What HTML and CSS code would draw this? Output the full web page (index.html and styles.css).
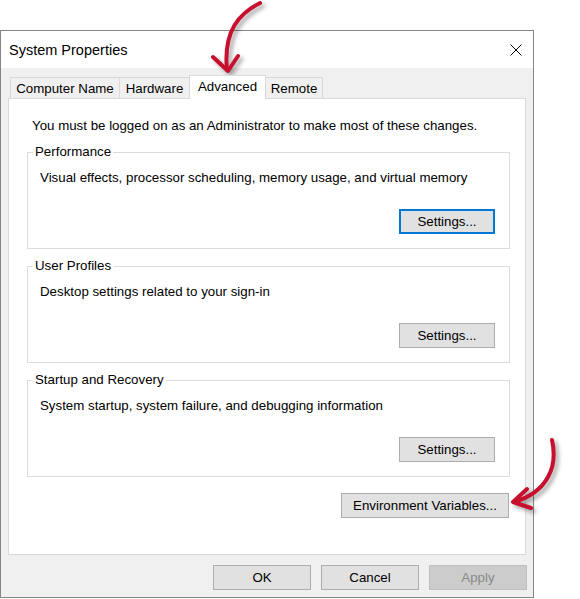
FILE: index.html
```html
<!DOCTYPE html>
<html lang="en">

<head>
    <meta charset="UTF-8">
    <meta name="viewport" content="width=device-width, initial-scale=1.0">
    <title>System Properties</title>
    <link rel="stylesheet" href="styles.css">
</head>

<body>
    <div class="dialog">
        <div class="titlebar">
            <span class="title">System Properties</span>
            <svg class="close" width="12" height="12" viewBox="0 0 12 12">
                <path d="M0.5 0.5 L11.5 11.5 M11.5 0.5 L0.5 11.5" stroke="#000" stroke-width="1" fill="none" />
            </svg>
        </div>
        <div class="client">
            <div class="tabs">
                <div class="tab tab-name">Computer Name</div>
                <div class="tab tab-hardware">Hardware</div>
                <div class="tab tab-active">Advanced</div>
                <div class="tab tab-remote">Remote</div>
            </div>
            <div class="tab-page">
                <p class="notice">You must be logged on as an Administrator to make most of these changes.</p>

                <fieldset class="group">
                    <legend>Performance</legend>
                    <p class="group-text">Visual effects, processor scheduling, memory usage, and virtual memory</p>
                    <div class="group-actions"><button class="btn btn-settings btn-default">Settings...</button></div>
                </fieldset>

                <fieldset class="group">
                    <legend>User Profiles</legend>
                    <p class="group-text">Desktop settings related to your sign-in</p>
                    <div class="group-actions"><button class="btn btn-settings">Settings...</button></div>
                </fieldset>

                <fieldset class="group">
                    <legend>Startup and Recovery</legend>
                    <p class="group-text">System startup, system failure, and debugging information</p>
                    <div class="group-actions"><button class="btn btn-settings">Settings...</button></div>
                </fieldset>

                <div class="env-row">
                    <button class="btn btn-env">Environment Variables...</button>
                </div>
            </div>
            <div class="dialog-buttons">
                <button class="btn btn-wide">OK</button>
                <button class="btn btn-wide">Cancel</button>
                <button class="btn btn-wide" disabled>Apply</button>
            </div>
        </div>
    </div>

    <!-- red callout arrows on top of the dialog -->
    <svg class="callouts" width="580" height="599" viewBox="0 0 580 599">
        <g class="arrow">
            <path d="M260 3 C240 13, 223 30, 227 70" />
            <path d="M213 57 L228 71 L238 56" />
        </g>
        <g class="arrow">
            <path d="M552 440 C558 466, 548 492, 514 502" />
            <path d="M527 489 L513 502 L531 508" />
        </g>
    </svg>
</body>

</html>
```

FILE: styles.css
```css
body {
    margin: 0;
    background-color: #ffffff;
    font-family: "Liberation Sans", Arial, sans-serif;
    font-size: 13.3px;
    color: #000000;
    position: relative;
    width: 580px;
    height: 599px;
    overflow: hidden;
}

.dialog {
    margin-top: 30px;
    width: 534px;
    height: 568px;
    box-sizing: border-box;
    border: 1px solid #868686;
    display: flex;
    flex-direction: column;
}

.titlebar {
    height: 37px;
    background-color: #ffffff;
    display: flex;
    align-items: center;
    justify-content: space-between;
    padding: 0 11px 0 8px;
}

.title {
    font-size: 14.5px;
    line-height: 18px;
}

.close {
    display: block;
}

.client {
    flex: 1;
    background-color: #f0f0f0;
    padding: 7px 6px 0 7px;
}

.tabs {
    height: 23px;
    display: flex;
    align-items: flex-end;
    padding-left: 2px;
}

.tab {
    height: 21px;
    box-sizing: border-box;
    border-top: 1px solid #d9d9d9;
    border-left: 1px solid #d9d9d9;
    background-color: #f0f0f0;
    text-align: center;
    line-height: 21px;
    white-space: nowrap;
}

.tab-name {
    width: 109px;
}

.tab-hardware {
    width: 70px;
}

.tab-active {
    width: 77px;
    height: 24px;
    line-height: 21px;
    margin-bottom: -1px;
    border-right: 1px solid #d9d9d9;
    background-color: #ffffff;
    position: relative;
    z-index: 1;
}

.tab-remote {
    width: 57px;
    border-left: none;
    border-right: 1px solid #d9d9d9;
}

.tab-page {
    height: 457px;
    margin-right: 1px;
    box-sizing: border-box;
    border: 1px solid #d9d9d9;
    background-color: #ffffff;
    padding-top: 19px;
}

.notice {
    margin: 0;
    padding-left: 23px;
    line-height: 15px;
}

.group {
    margin: 9px 15px 0 18px;
    padding: 0;
    border: 1px solid #dcdcdc;
    min-width: 0;
}

.notice + .group {
    margin-top: 11px;
}

.group legend {
    margin-left: 5px;
    padding: 0 2px;
    line-height: 16px;
}

.group-text {
    margin: 10px 0 0 12px;
    line-height: 15px;
}

.group-actions {
    display: flex;
    justify-content: flex-end;
    margin: 24px 14px 14px 0;
}

.btn {
    height: 25px;
    box-sizing: border-box;
    border: 1px solid #adadad;
    background-color: #e1e1e1;
    font-family: "Liberation Sans", Arial, sans-serif;
    font-size: 13.3px;
    color: #000000;
    padding: 0;
}

.btn-settings {
    width: 96px;
}

.btn-default {
    border: 2px solid #0078d7;
}

.btn-env {
    width: 168px;
}

.env-row {
    display: flex;
    justify-content: flex-end;
    margin-top: 16px;
    padding-right: 16px;
}

.dialog-buttons {
    display: flex;
    justify-content: flex-end;
    gap: 10px;
    margin-top: 10px;
}

.btn-wide {
    width: 98px;
}

.btn:disabled {
    background-color: #cccccc;
    border-color: #bfbfbf;
    color: #8a8a8a;
}

.callouts {
    position: absolute;
    top: 0;
    left: 0;
    pointer-events: none;
    filter: drop-shadow(3px 3px 2px rgba(0, 0, 0, 0.35));
}

.arrow path {
    fill: none;
    stroke: #c8102e;
    stroke-width: 4;
    stroke-linecap: round;
    stroke-linejoin: round;
}
```
